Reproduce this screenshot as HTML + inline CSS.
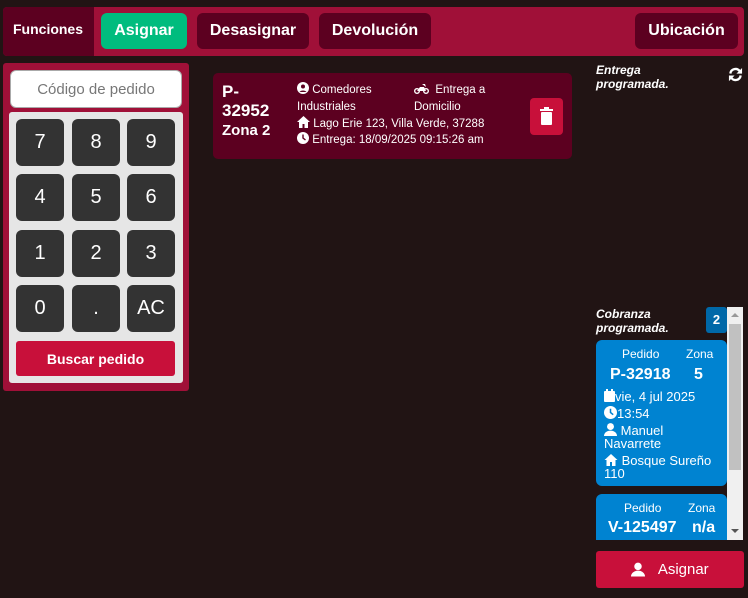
<!DOCTYPE html>
<html><head><meta charset="utf-8"><style>
*{box-sizing:border-box;margin:0;padding:0}
body{width:748px;height:598px;background:#211414;font-family:"Liberation Sans",sans-serif;color:#fff;position:relative;overflow:hidden}
.a{position:absolute}
.btn{position:absolute;border-radius:6px;font-weight:bold;font-size:16px;display:flex;align-items:center;justify-content:center}
.dk{background:#5c0020}
.key{position:absolute;width:48px;height:47px;background:#333;border-radius:6px;font-size:20px;display:flex;align-items:center;justify-content:center}
.c{font-size:11.5px;line-height:17px;white-space:nowrap}
svg.i{vertical-align:-1px;fill:#fff}
</style></head><body>
<div class="a" style="left:3px;top:7px;width:741px;height:49px;background:#a01038;border-radius:4px"></div>
<div class="a dk" style="left:3px;top:7px;width:91px;height:49px;border-radius:4px 0 0 4px;font-weight:bold;font-size:14px;padding:14px 0 0 10px">Funciones</div>
<div class="btn" style="left:101px;top:13px;width:86px;height:36px;background:#00bc7e">Asignar</div>
<div class="btn dk" style="left:197px;top:13px;width:112px;height:36px">Desasignar</div>
<div class="btn dk" style="left:319px;top:13px;width:112px;height:36px">Devolución</div>
<div class="btn dk" style="left:635px;top:13px;width:103px;height:36px">Ubicación</div>

<div class="a" style="left:3px;top:63px;width:186px;height:328px;background:#a01038;border-radius:3px"></div>
<div class="a" style="left:10px;top:70px;width:172px;height:38px;background:#fff;border-radius:6px;border:1px solid #aaa;color:#777;font-size:15px;display:flex;align-items:center;justify-content:center">Código de pedido</div>
<div class="a" style="left:9px;top:112px;width:174px;height:271px;background:#e6e6e6;border-radius:3px"></div>
<div class="key" style="left:16px;top:119px">7</div><div class="key" style="left:72px;top:119px">8</div><div class="key" style="left:127px;top:119px">9</div>
<div class="key" style="left:16px;top:174px">4</div><div class="key" style="left:72px;top:174px">5</div><div class="key" style="left:127px;top:174px">6</div>
<div class="key" style="left:16px;top:230px">1</div><div class="key" style="left:72px;top:230px">2</div><div class="key" style="left:127px;top:230px">3</div>
<div class="key" style="left:16px;top:285px">0</div><div class="key" style="left:72px;top:285px">.</div><div class="key" style="left:127px;top:285px">AC</div>
<div class="btn" style="left:16px;top:341px;width:159px;height:35px;background:#c8103a;font-size:14px;border-radius:3px">Buscar pedido</div>

<div class="a" style="left:213px;top:73px;width:359px;height:86px;background:#5c0020;border-radius:5px"></div>
<div class="a" style="left:222px;top:82px;font-weight:bold;font-size:17px;line-height:19px">P-<br>32952</div>
<div class="a" style="left:222px;top:122px;font-weight:bold;font-size:15px">Zona 2</div>
<div class="a c" style="left:297px;top:82px"><svg class="i" width="12" height="12" viewBox="0 0 12 12"><circle cx="6" cy="6" r="6"/><circle cx="6" cy="4.5" r="2" fill="#5c0020"/><path d="M2.5 10a4 3 0 0 1 7 0z" fill="#5c0020"/></svg> Comedores<br>Industriales</div>
<div class="a c" style="left:414px;top:82px"><svg class="i" width="15" height="11" viewBox="0 0 15 11"><circle cx="3" cy="8" r="2.3" fill="none" stroke="#fff" stroke-width="1.4"/><circle cx="12" cy="8" r="2.3" fill="none" stroke="#fff" stroke-width="1.4"/><path d="M3 8l3-4h4l2 4M8 1h3l1 3"/></svg> &nbsp;Entrega a<br>Domicilio</div>
<div class="a c" style="left:297px;top:116px"><svg class="i" width="13" height="12" viewBox="0 0 13 12"><path d="M6.5 0L0 6h2v6h3.5V8h2v4H11V6h2z"/></svg> Lago Erie 123, Villa Verde, 37288</div>
<div class="a c" style="left:297px;top:132px"><svg class="i" width="12" height="12" viewBox="0 0 12 12"><circle cx="6" cy="6" r="6"/><path d="M6 2.5V6l2.5 2" stroke="#5c0020" stroke-width="1.4" fill="none"/></svg> Entrega: 18/09/2025 09:15:26 am</div>
<div class="a" style="left:530px;top:98px;width:33px;height:37px;background:#c8103a;border-radius:4px"><svg width="33" height="37"><rect x="11" y="14" width="11" height="13" rx="1" fill="#fff"/><rect x="10" y="11" width="13" height="2" fill="#fff"/><rect x="14" y="9" width="5" height="2" fill="#fff"/></svg></div>

<div class="a" style="left:596px;top:63px;font-weight:bold;font-style:italic;font-size:12px;line-height:14px">Entrega<br>programada.</div>
<svg class="a" style="left:728px;top:67px" width="15" height="15" viewBox="0 0 16 16"><path d="M2.5 7A5.5 5.5 0 0 1 12.5 4.5M13.5 9A5.5 5.5 0 0 1 3.5 11.5" stroke="#fff" stroke-width="2.4" fill="none"/><path d="M15 1v6h-6zM1 15V9h6z" fill="#fff"/></svg>

<div class="a" style="left:596px;top:307px;font-weight:bold;font-style:italic;font-size:12px;line-height:14px">Cobranza<br>programada.</div>
<div class="a" style="left:706px;top:307px;width:21px;height:26px;background:#0068a8;border-radius:3px;font-weight:bold;font-size:13px;text-align:center;line-height:26px">2</div>
<div class="a" style="left:727px;top:307px;width:16px;height:233px;background:#f0f0f0"><div style="position:absolute;left:2px;top:17px;width:12px;height:146px;background:#c1c1c1"></div>
<div style="position:absolute;left:4px;top:6px;border:4px solid transparent;border-bottom:4px solid #999;border-top:0"></div>
<div style="position:absolute;left:4px;top:222px;border:4px solid transparent;border-top:4px solid #555;border-bottom:0"></div></div>
<div class="a" style="left:596px;top:340px;width:131px;height:146px;background:#0083d1;border-radius:6px;font-size:13px">
<div class="a" style="left:26px;top:7px;font-size:12px">Pedido</div><div class="a" style="left:90px;top:7px;font-size:12px">Zona</div>
<div class="a" style="left:14px;top:26px;font-weight:bold;font-size:16px">P-32918</div><div class="a" style="left:98px;top:26px;font-weight:bold;font-size:16px">5</div>
<div class="a" style="left:8px;top:49px;white-space:nowrap"><svg class="i" width="11" height="13" viewBox="0 0 11 13"><rect y="2" width="11" height="11" rx="1"/><rect x="2" y="0" width="2" height="3"/><rect x="7" y="0" width="2" height="3"/></svg>vie, 4 jul 2025</div>
<div class="a" style="left:8px;top:66px"><svg class="i" width="13" height="13" viewBox="0 0 12 12"><circle cx="6" cy="6" r="6"/><path d="M6 2.5V6l2.5 2" stroke="#0083d1" stroke-width="1.4" fill="none"/></svg>13:54</div>
<div class="a" style="left:8px;top:83px;line-height:13px"><svg class="i" width="13" height="13" viewBox="0 0 12 12"><circle cx="6" cy="3.3" r="3.2"/><path d="M0 12a6 5 0 0 1 12 0z"/></svg> Manuel<br>Navarrete</div>
<div class="a" style="left:8px;top:114px;line-height:13px;white-space:nowrap"><svg class="i" width="14" height="12" viewBox="0 0 13 12"><path d="M6.5 0L0 6h2v6h3.5V8h2v4H11V6h2z"/></svg> Bosque Sureño<br>110</div>
</div>
<div class="a" style="left:596px;top:494px;width:131px;height:46px;background:#0083d1;border-radius:6px 6px 0 0">
<div class="a" style="left:28px;top:7px;font-size:12px">Pedido</div><div class="a" style="left:92px;top:7px;font-size:12px">Zona</div>
<div class="a" style="left:12px;top:25px;font-weight:bold;font-size:16px">V-125497</div><div class="a" style="left:96px;top:25px;font-weight:bold;font-size:16px">n/a</div>
</div>
<div class="btn" style="left:596px;top:551px;width:148px;height:37px;background:#c8103a;font-size:15px;font-weight:normal;border-radius:3px"><svg class="i" width="14" height="15" viewBox="0 0 12 12"><circle cx="6" cy="3.3" r="3.2"/><path d="M0 12a6 5 0 0 1 12 0z"/></svg>&nbsp;&nbsp;&nbsp;Asignar</div>
</body></html>
